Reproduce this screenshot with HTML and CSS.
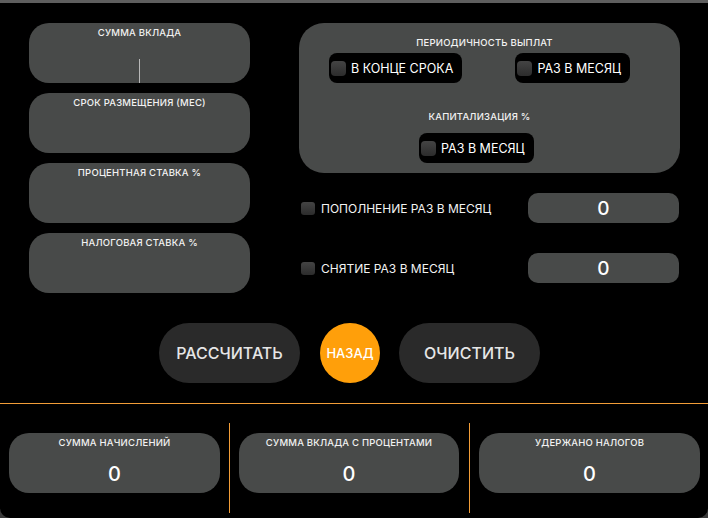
FILE: index.html
```html
<!DOCTYPE html>
<html lang="ru">
<head>
<meta charset="utf-8">
<title>Калькулятор вклада</title>
<link rel="stylesheet" href="styles.css">
</head>
<body>
<div class="app">
  <div class="topbar"></div>
  <div class="main">
    <div class="inputs">
      <div class="field">
        <div class="field-label">СУММА ВКЛАДА</div>
        <div class="caret"></div>
      </div>
      <div class="field">
        <div class="field-label">СРОК РАЗМЕЩЕНИЯ (МЕС)</div>
      </div>
      <div class="field">
        <div class="field-label">ПРОЦЕНТНАЯ СТАВКА %</div>
      </div>
      <div class="field">
        <div class="field-label">НАЛОГОВАЯ СТАВКА %</div>
      </div>
    </div>
    <div class="options">
      <div class="panel">
        <div class="panel-title">ПЕРИОДИЧНОСТЬ ВЫПЛАТ</div>
        <div class="pill-row">
          <label class="pill"><span class="check"></span>В КОНЦЕ СРОКА</label>
          <label class="pill"><span class="check"></span>РАЗ В МЕСЯЦ</label>
        </div>
        <div class="panel-title second">КАПИТАЛИЗАЦИЯ %</div>
        <div class="pill-row single">
          <label class="pill"><span class="check"></span>РАЗ В МЕСЯЦ</label>
        </div>
      </div>
      <div class="opt-row">
        <label class="opt-label"><span class="check small"></span>ПОПОЛНЕНИЕ РАЗ В МЕСЯЦ</label>
        <div class="num-input">0</div>
      </div>
      <div class="opt-row">
        <label class="opt-label"><span class="check small"></span>СНЯТИЕ РАЗ В МЕСЯЦ</label>
        <div class="num-input">0</div>
      </div>
    </div>
  </div>
  <div class="actions">
    <button class="btn">РАССЧИТАТЬ</button>
    <button class="btn-round">НАЗАД</button>
    <button class="btn">ОЧИСТИТЬ</button>
  </div>
  <div class="divider"></div>
  <div class="results">
    <div class="result r1">
      <div class="field-label">СУММА НАЧИСЛЕНИЙ</div>
      <div class="result-value">0</div>
    </div>
    <div class="vline"></div>
    <div class="result r2">
      <div class="field-label">СУММА ВКЛАДА С ПРОЦЕНТАМИ</div>
      <div class="result-value">0</div>
    </div>
    <div class="vline second"></div>
    <div class="result r3">
      <div class="field-label">УДЕРЖАНО НАЛОГОВ</div>
      <div class="result-value">0</div>
    </div>
  </div>
</div>
</body>
</html>
```

FILE: styles.css
```css
html {
  background: #3a3a3a;
}
body {
  margin: 0;
  width: 708px;
  height: 518px;
  font-family: "Inter", "Liberation Sans", sans-serif;
  color: #ffffff;
}
.app {
  width: 708px;
  height: 518px;
  background: #000000;
  border-radius: 0 0 10px 10px;
  overflow: hidden;
}
.topbar {
  height: 3px;
  background: #5e5e5e;
}
.main {
  display: flex;
  padding-top: 20px;
  padding-left: 29px;
}
.inputs {
  width: 221px;
  display: flex;
  flex-direction: column;
  gap: 10px;
}
.field {
  height: 60px;
  background: #484a49;
  border-radius: 20px;
  display: flex;
  flex-direction: column;
  align-items: center;
}
.field-label {
  font-size: 9.5px;
  font-weight: 500;
  line-height: 12px;
  padding-top: 4px;
  letter-spacing: 0.2px;
  color: #f2f2f2;
  white-space: nowrap;
}
.caret {
  width: 1px;
  height: 24px;
  margin-top: auto;
  background: #b8b8b8;
}
.options {
  margin-left: 49px;
  width: 381px;
}
.panel {
  height: 150px;
  box-sizing: border-box;
  background: #484a49;
  border-radius: 25px;
  padding-top: 14px;
}
.panel-title {
  font-size: 9.5px;
  font-weight: 500;
  line-height: 12px;
  letter-spacing: 0.2px;
  text-align: center;
  padding-right: 10px;
  color: #f2f2f2;
}
.panel-title.second {
  margin-top: 28px;
  padding-right: 20px;
}
.pill-row {
  display: flex;
  justify-content: space-between;
  padding: 0 50px 0 30px;
  margin-top: 4px;
}
.pill-row.single {
  padding-left: 120px;
  margin-top: 10px;
}
.pill {
  height: 30px;
  background: #000000;
  border-radius: 8px;
  display: flex;
  align-items: center;
  gap: 5px;
  padding: 0 9px 0 2px;
  font-size: 12.5px;
  font-weight: 400;
  color: #ffffff;
  white-space: nowrap;
}
.check {
  width: 15px;
  height: 15px;
  border-radius: 4px;
  background: linear-gradient(#444444, #2c2c2c);
  flex: none;
}
.check.small {
  width: 14px;
  height: 13px;
  border-radius: 3px;
}
.opt-row {
  display: flex;
  align-items: center;
  justify-content: space-between;
  height: 30px;
  margin-top: 20px;
  padding-left: 2px;
}
.opt-row + .opt-row {
  margin-top: 30px;
}
.opt-label {
  display: flex;
  align-items: center;
  gap: 6px;
  font-size: 12px;
  font-weight: 400;
  color: #f2f2f2;
  white-space: nowrap;
}
.num-input {
  width: 151px;
  height: 30px;
  box-sizing: border-box;
  margin-right: 1px;
  background: #484a49;
  border-radius: 10px;
  display: flex;
  align-items: center;
  justify-content: center;
  font-size: 19px;
  font-weight: 500;
  color: #ffffff;
}
.actions {
  display: flex;
  align-items: center;
  padding-left: 159px;
  margin-top: 30px;
  gap: 20px;
}
.btn {
  width: 141px;
  height: 60px;
  border: none;
  border-radius: 30px;
  background: #2a2a2a;
  color: #e6e6e6;
  font-family: inherit;
  font-size: 16px;
  font-weight: 500;
}
.btn-round {
  width: 60px;
  height: 60px;
  border: none;
  border-radius: 50%;
  background: #ff9f0a;
  color: #ffffff;
  font-family: inherit;
  font-size: 13px;
  font-weight: 500;
  padding: 0;
  margin-right: -1px;
}
.divider {
  height: 1px;
  margin-top: 20px;
  background: #f29d38;
}
.results {
  display: flex;
  align-items: flex-start;
  padding-top: 19px;
  padding-left: 9px;
}
.result {
  height: 60px;
  margin-top: 10px;
  background: #484a49;
  border-radius: 20px;
  display: flex;
  flex-direction: column;
  align-items: center;
}
.r1 { width: 211px; }
.r2 { width: 220px; }
.r3 { width: 221px; }
.result-value {
  font-size: 20px;
  font-weight: 500;
  line-height: 24px;
  margin-top: 13px;
}
.vline {
  width: 1px;
  height: 90px;
  background: #f29d38;
  margin: 0 9px;
}
.vline.second {
  margin-left: 10px;
}
```
